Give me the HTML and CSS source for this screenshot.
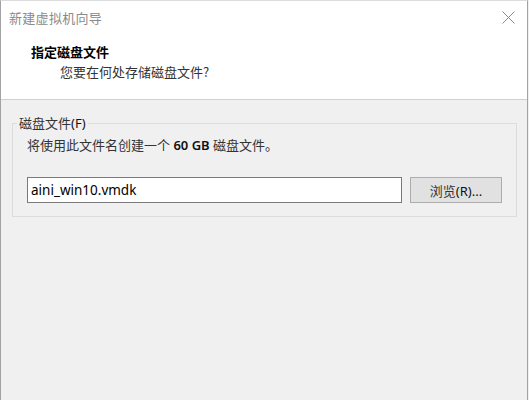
FILE: index.html
```html
<!DOCTYPE html>
<html lang="zh-CN">
<head>
    <meta charset="UTF-8">
    <title>新建虚拟机向导</title>
    <link rel="stylesheet" href="styles.css">
</head>
<body>

<div class="window">
    <div class="header">
        <div class="titlebar">
            <span class="title">新建虚拟机向导</span>
            <svg class="close" width="13" height="13" viewBox="0 0 13 13">
                <path d="M0.5 0.5 L12.5 12.5 M12.5 0.5 L0.5 12.5" stroke="#8a8a8a" stroke-width="1" fill="none"/>
            </svg>
        </div>
        <div class="heading">指定磁盘文件</div>
        <div class="subheading">您要在何处存储磁盘文件?</div>
    </div>

    <div class="content">
        <fieldset class="group">
            <legend>磁盘文件<span class="latin">(F)</span></legend>
            <div class="group-body">
                <p class="note">将使用此文件名创建一个<span class="latin strong"> 60 GB </span>磁盘文件。</p>
                <div class="file-row">
                    <input type="text" class="file-input" value="aini_win10.vmdk">
                    <button class="browse">浏览<span class="latin">(R)...</span></button>
                </div>
            </div>
        </fieldset>
    </div>
</div>

</body>
</html>
```

FILE: styles.css
```css
body {
    margin: 0;
    padding: 0;
    background-color: #f0f0f0;
    font-family: "Noto Sans CJK SC", sans-serif;
    font-size: 13px;
    color: #222;
}
.window {
    width: 528px;
    height: 400px;
    box-sizing: border-box;
    border-left: 1px solid #a3a3a3;
    border-right: 1px solid #a3a3a3;
    border-top: 1px solid #dcdcdc;
    background-color: #f0f0f0;
}
.header {
    height: 98px;
    background-color: #fff;
    border-bottom: 1px solid #d0d0d0;
}
.titlebar {
    height: 32px;
    display: flex;
    align-items: center;
    justify-content: space-between;
    padding: 0 12px 0 8px;
}
.title {
    color: #8a8a8a;
    font-size: 13px;
    letter-spacing: 0.3px;
}
.heading {
    margin-top: 9px;
    padding-left: 30px;
    line-height: 20px;
    font-weight: bold;
    color: #000;
}
.subheading {
    padding-left: 59px;
    line-height: 20px;
    color: #333;
}
.content {
    padding: 14px 10px 0 11px;
}
.group {
    margin: 0;
    padding: 0 14px 13px 0;
    border: 1px solid #dcdcdc;
}
.group legend {
    margin-left: 4px;
    padding: 0 2px;
    line-height: 18px;
    color: #333;
}
.group-body {
    padding-left: 14px;
}
.note {
    margin: 3px 0 0 0;
    line-height: 20px;
    color: #333;
}
.latin {
    font-family: "Noto Sans", sans-serif;
    color: #111;
}
.strong {
    font-weight: 600;
}
.file-row {
    display: flex;
    gap: 8px;
    margin-top: 22px;
}
.file-input {
    width: 375px;
    height: 26px;
    box-sizing: border-box;
    margin: 0;
    padding: 0 0 0 3px;
    border: 1px solid #7a7a7a;
    background-color: #fff;
    font-family: "Noto Sans", sans-serif;
    font-size: 13.5px;
    color: #000;
    outline: none;
}
.browse {
    width: 92px;
    height: 26px;
    box-sizing: border-box;
    margin: 0;
    padding: 0;
    border: 1px solid #adadad;
    background-color: #e1e1e1;
    font-family: "Noto Sans CJK SC", sans-serif;
    font-size: 13px;
    color: #333;
}
```
